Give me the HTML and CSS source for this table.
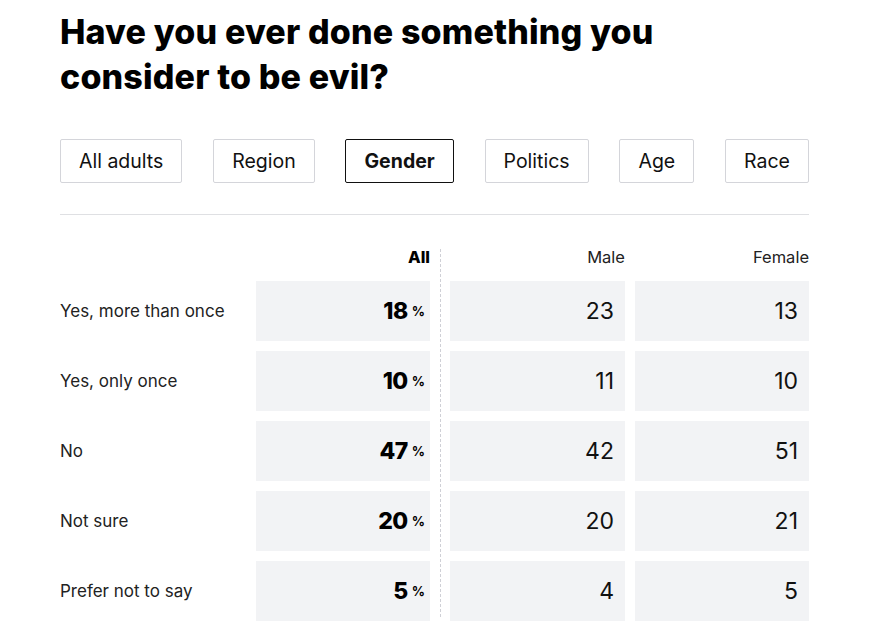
FILE: index.html
```html
<!DOCTYPE html>
<html lang="en">
<head>
<meta charset="utf-8">
<link rel="stylesheet" href="styles.css">
</head>
<body>
<main class="page">
  <h1 class="title">Have you ever done something you consider to be evil?</h1>
  <div class="tabs">
    <button class="tab">All adults</button>
    <button class="tab">Region</button>
    <button class="tab active">Gender</button>
    <button class="tab">Politics</button>
    <button class="tab">Age</button>
    <button class="tab">Race</button>
  </div>
  <hr class="rule">
  <div class="table">
    <div class="head blank"></div>
    <div class="head all">All</div>
    <div class="divider"></div>
    <div class="head m">Male</div>
    <div class="head f">Female</div>

    <div class="label">Yes, more than once</div>
    <div class="cell total"><b>18</b><span class="pct">%</span></div>
    <div class="cell m">23</div>
    <div class="cell f">13</div>

    <div class="label">Yes, only once</div>
    <div class="cell total"><b>10</b><span class="pct">%</span></div>
    <div class="cell m">11</div>
    <div class="cell f">10</div>

    <div class="label">No</div>
    <div class="cell total"><b>47</b><span class="pct">%</span></div>
    <div class="cell m">42</div>
    <div class="cell f">51</div>

    <div class="label">Not sure</div>
    <div class="cell total"><b>20</b><span class="pct">%</span></div>
    <div class="cell m">20</div>
    <div class="cell f">21</div>

    <div class="label">Prefer not to say</div>
    <div class="cell total"><b>5</b><span class="pct">%</span></div>
    <div class="cell m">4</div>
    <div class="cell f">5</div>
  </div>
</main>
</body>
</html>
```
FILE: styles.css
```css
* { box-sizing: border-box; }
html, body { margin: 0; background: #fff; }
body { font-family: Inter, "Liberation Sans", sans-serif; color: #111; }
.page { width: 749px; margin-left: 60px; }
.title {
  margin: 9px 0 0;
  font-size: 34px;
  line-height: 45px;
  font-weight: 800;
  letter-spacing: 0.15px;
  color: #000;
  width: 680px;
}
.tabs {
  display: flex;
  justify-content: space-between;
  margin-top: 40px;
}
.tab {
  height: 44px;
  padding: 0 18px;
  font-family: inherit;
  font-size: 19.5px;
  color: #111;
  background: #fff;
  border: 1px solid #d4d5da;
  border-radius: 2px;
}
.tab.active { border-color: #111; font-weight: 700; }
.rule {
  margin: 31px 0 0;
  border: 0;
  border-top: 1px solid #dfe0e3;
}
.table {
  display: grid;
  grid-template-columns: 196px 174px 20px 175px 10px 174px;
  grid-template-rows: 24px;
  grid-auto-rows: 60px;
  row-gap: 10px;
  margin-top: 32px;
}
.head {
  grid-row: 1;
  font-size: 16.5px;
  text-align: right;
  color: #222;
  line-height: 20px;
}
.head.blank { grid-column: 1; }
.head.all { grid-column: 2; font-weight: 800; color: #000; }
.divider {
  grid-column: 3;
  grid-row: 1 / span 6;
  justify-self: center;
  width: 0;
  margin-top: 2px;
  margin-bottom: 4px;
  border-left: 1px dashed #cfd0d6;
}
.m { grid-column: 4; }
.f { grid-column: 6; }
.label {
  grid-column: 1;
  display: flex;
  align-items: center;
  font-size: 17px;
  color: #222;
}
.cell {
  background: #f2f3f5;
  display: flex;
  align-items: center;
  justify-content: flex-end;
  padding-right: 11px;
  font-size: 23px;
  color: #111;
}
.cell.total { grid-column: 2; padding-right: 5px; }
.cell.total b { font-weight: 800; color: #000; letter-spacing: -0.5px; }
.pct { font-size: 13px; font-weight: 700; margin-left: 4px; color: #000; }
```
